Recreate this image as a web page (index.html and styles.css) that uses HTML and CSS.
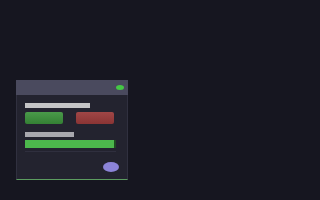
FILE: index.html
```html
<!DOCTYPE html>
<html lang="en">
<head>
  <meta charset="UTF-8" />
  <title>Panel</title>
  <link rel="stylesheet" href="styles.css">
</head>
<body>
  <div class="panel">
    <div class="panel-head">
      <span class="status-dot"></span>
    </div>
    <div class="panel-body">
      <div class="label label-long"></div>
      <div class="buttons">
        <div class="btn btn-ok"></div>
        <div class="btn btn-cancel"></div>
      </div>
      <div class="label label-short"></div>
      <div class="progress"></div>
      <div class="divider"></div>
      <div class="footer">
        <span class="fab"></span>
      </div>
    </div>
  </div>
</body>
</html>
```

FILE: styles.css
```css
html, body {
  margin: 0;
  padding: 0;
  background: #161620;
  width: 320px;
  height: 200px;
  overflow: hidden;
}

body {
  padding: 80px 0 0 16px;
  box-sizing: border-box;
}

.panel {
  width: 112px;
  height: 100px;
  box-sizing: border-box;
  background: #23232f;
  border: 1px solid #30303f;
  border-top: none;
  border-bottom: 1px solid #5c9c60;
  display: flex;
  flex-direction: column;
}

.panel-head {
  height: 15px;
  background: #4a4a5e;
  display: flex;
  align-items: center;
  justify-content: flex-end;
  padding-right: 4px;
  margin: 0 -1px;
}

.status-dot {
  width: 8px;
  height: 5px;
  border-radius: 50%;
  background: #45c845;
}

.panel-body {
  flex: 1;
  display: flex;
  flex-direction: column;
  padding: 8px 0 0 8px;
}

.label {
  height: 5px;
  background: #c4c4c6;
}

.label-long { width: 65px; }
.label-short { width: 49px; background: #a8a8ae; margin-top: 8px; }

.buttons {
  display: flex;
  gap: 13px;
  margin-top: 4px;
}

.btn {
  width: 38px;
  height: 12px;
  border-radius: 2px;
}

.btn-ok { background: linear-gradient(#4a9a4a, #348034); }
.btn-cancel { background: linear-gradient(#a04646, #8a3434); }

.progress {
  width: 89px;
  height: 8px;
  margin-top: 3px;
  background: #4cb84c;
  border-right: 2px solid #1f4a22;
}

.divider {
  width: 91px;
  height: 1px;
  margin-top: 3px;
  background: #2f2f3e;
}

.footer {
  display: flex;
  justify-content: flex-end;
  padding-right: 8px;
  margin-top: 10px;
}

.fab {
  width: 16px;
  height: 10px;
  border-radius: 50%;
  background: #8c84d8;
}
```
